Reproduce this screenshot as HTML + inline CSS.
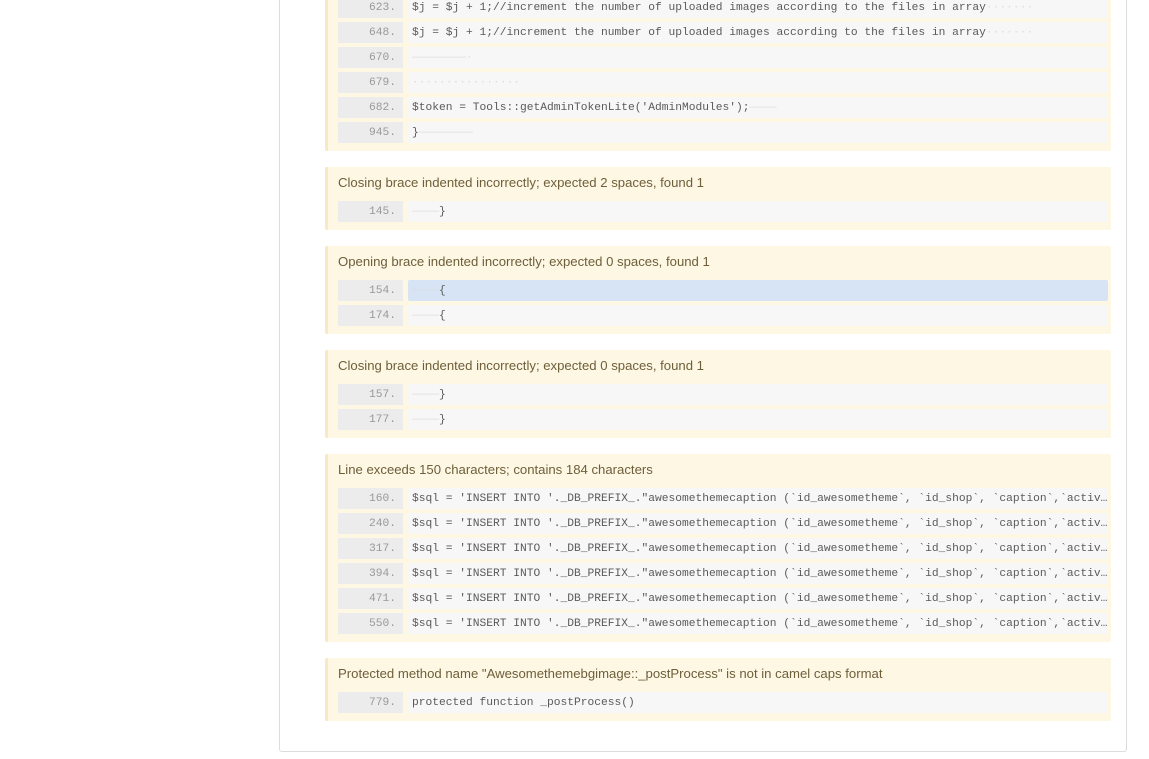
<!DOCTYPE html>
<html><head><meta charset="utf-8"><style>
*{margin:0;padding:0;box-sizing:border-box}
body{width:1149px;height:759px;background:#fff;position:relative;overflow:hidden;font-family:"Liberation Sans",sans-serif}
.panel{position:absolute;left:279px;top:-10px;width:848px;height:762px;border:1px solid #ddd;border-radius:0 0 3px 3px}
.blk{position:absolute;left:325px;width:786px;background:#fdf7e4;border-left:3px solid #f6e9c3;border-radius:2px;padding:0 3px 4px 10px}
.t{height:34px;line-height:31px;font-size:13.15px;color:#6e5f3a}
.r{display:flex;height:25px}
.n{width:65px;height:21px;background:#ececec;color:#999;font:11.25px/23px "Liberation Mono",monospace;text-align:right;padding-right:7px}
.c{flex:1;margin-left:5px;height:21px;background:#f7f7f7;color:#5a5a5a;font:11.25px/23px "Liberation Mono",monospace;padding-left:4px;white-space:pre;overflow:hidden;border-radius:2px}
.h{background:#d6e4f5}
i{font-style:normal;color:#ddd}
</style></head><body>
<div class="panel"></div>
<div class="blk" style="top:-7px;padding-top:4px">
<div class="r"><div class="n">623.</div><div class="c">$j = $j + 1;//increment the number of uploaded images according to the files in array<i>·······</i></div></div>
<div class="r"><div class="n">648.</div><div class="c">$j = $j + 1;//increment the number of uploaded images according to the files in array<i>·······</i></div></div>
<div class="r"><div class="n">670.</div><div class="c"><i>————————·</i></div></div>
<div class="r"><div class="n">679.</div><div class="c"><i>················</i></div></div>
<div class="r"><div class="n">682.</div><div class="c">$token = Tools::getAdminTokenLite('AdminModules');<i>————</i></div></div>
<div class="r"><div class="n">945.</div><div class="c">}<i>————————</i></div></div>
</div>
<div class="blk" style="top:167px"><div class="t">Closing brace indented incorrectly; expected 2 spaces, found 1</div>
<div class="r"><div class="n">145.</div><div class="c"><i>————</i>}</div></div></div>
<div class="blk" style="top:246px"><div class="t">Opening brace indented incorrectly; expected 0 spaces, found 1</div>
<div class="r"><div class="n">154.</div><div class="c h"><i>————</i>{</div></div>
<div class="r"><div class="n">174.</div><div class="c"><i>————</i>{</div></div></div>
<div class="blk" style="top:350px"><div class="t">Closing brace indented incorrectly; expected 0 spaces, found 1</div>
<div class="r"><div class="n">157.</div><div class="c"><i>————</i>}</div></div>
<div class="r"><div class="n">177.</div><div class="c"><i>————</i>}</div></div></div>
<div class="blk" style="top:454px"><div class="t">Line exceeds 150 characters; contains 184 characters</div>
<div class="r"><div class="n">160.</div><div class="c">$sql = 'INSERT INTO '._DB_PREFIX_."awesomethemecaption (`id_awesometheme`, `id_shop`, `caption`,`activ…</div></div>
<div class="r"><div class="n">240.</div><div class="c">$sql = 'INSERT INTO '._DB_PREFIX_."awesomethemecaption (`id_awesometheme`, `id_shop`, `caption`,`activ…</div></div>
<div class="r"><div class="n">317.</div><div class="c">$sql = 'INSERT INTO '._DB_PREFIX_."awesomethemecaption (`id_awesometheme`, `id_shop`, `caption`,`activ…</div></div>
<div class="r"><div class="n">394.</div><div class="c">$sql = 'INSERT INTO '._DB_PREFIX_."awesomethemecaption (`id_awesometheme`, `id_shop`, `caption`,`activ…</div></div>
<div class="r"><div class="n">471.</div><div class="c">$sql = 'INSERT INTO '._DB_PREFIX_."awesomethemecaption (`id_awesometheme`, `id_shop`, `caption`,`activ…</div></div>
<div class="r"><div class="n">550.</div><div class="c">$sql = 'INSERT INTO '._DB_PREFIX_."awesomethemecaption (`id_awesometheme`, `id_shop`, `caption`,`activ…</div></div></div>
<div class="blk" style="top:658px"><div class="t">Protected method name "Awesomethemebgimage::_postProcess" is not in camel caps format</div>
<div class="r"><div class="n">779.</div><div class="c">protected function _postProcess()</div></div></div>
</body></html>
